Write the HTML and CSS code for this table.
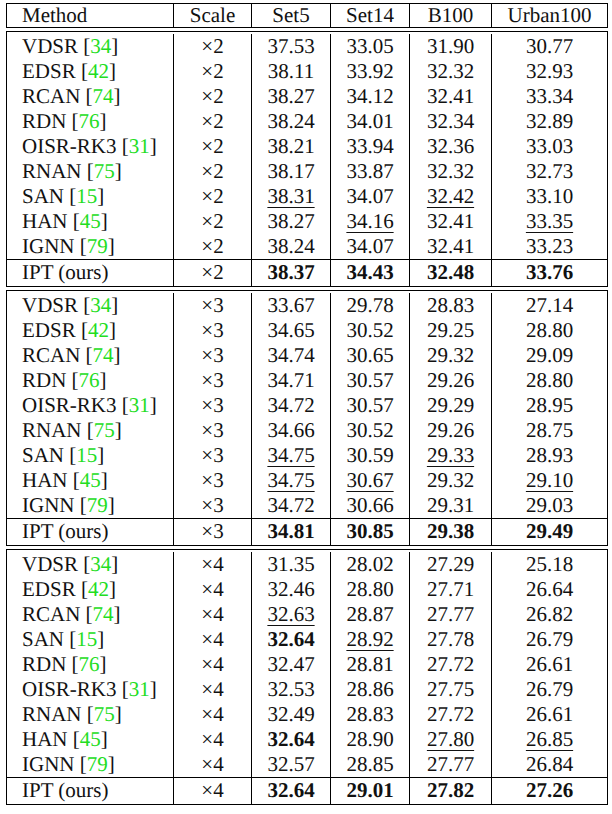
FILE: index.html
```html
<!DOCTYPE html>
<html>
<head>
<meta charset="utf-8">
<link rel="stylesheet" href="styles.css">
</head>
<body>
<div class="tbl">
  <div class="blk head">
    <div class="row">
      <div class="c m">Method</div><div class="c">Scale</div><div class="c">Set5</div><div class="c">Set14</div><div class="c">B100</div><div class="c">Urban100</div>
    </div>
  </div>

  <div class="blk sec">
    <div class="row"><div class="c m">VDSR [<span class="ref">34</span>]</div><div class="c">×2</div><div class="c">37.53</div><div class="c">33.05</div><div class="c">31.90</div><div class="c">30.77</div></div>
    <div class="row"><div class="c m">EDSR [<span class="ref">42</span>]</div><div class="c">×2</div><div class="c">38.11</div><div class="c">33.92</div><div class="c">32.32</div><div class="c">32.93</div></div>
    <div class="row"><div class="c m">RCAN [<span class="ref">74</span>]</div><div class="c">×2</div><div class="c">38.27</div><div class="c">34.12</div><div class="c">32.41</div><div class="c">33.34</div></div>
    <div class="row"><div class="c m">RDN [<span class="ref">76</span>]</div><div class="c">×2</div><div class="c">38.24</div><div class="c">34.01</div><div class="c">32.34</div><div class="c">32.89</div></div>
    <div class="row"><div class="c m">OISR-RK3 [<span class="ref">31</span>]</div><div class="c">×2</div><div class="c">38.21</div><div class="c">33.94</div><div class="c">32.36</div><div class="c">33.03</div></div>
    <div class="row"><div class="c m">RNAN [<span class="ref">75</span>]</div><div class="c">×2</div><div class="c">38.17</div><div class="c">33.87</div><div class="c">32.32</div><div class="c">32.73</div></div>
    <div class="row"><div class="c m">SAN [<span class="ref">15</span>]</div><div class="c">×2</div><div class="c"><u>38.31</u></div><div class="c">34.07</div><div class="c"><u>32.42</u></div><div class="c">33.10</div></div>
    <div class="row"><div class="c m">HAN [<span class="ref">45</span>]</div><div class="c">×2</div><div class="c">38.27</div><div class="c"><u>34.16</u></div><div class="c">32.41</div><div class="c"><u>33.35</u></div></div>
    <div class="row"><div class="c m">IGNN [<span class="ref">79</span>]</div><div class="c">×2</div><div class="c">38.24</div><div class="c">34.07</div><div class="c">32.41</div><div class="c">33.23</div></div>
    <div class="row ours"><div class="c m">IPT (ours)</div><div class="c">×2</div><div class="c"><b>38.37</b></div><div class="c"><b>34.43</b></div><div class="c"><b>32.48</b></div><div class="c"><b>33.76</b></div></div>
  </div>

  <div class="blk sec">
    <div class="row"><div class="c m">VDSR [<span class="ref">34</span>]</div><div class="c">×3</div><div class="c">33.67</div><div class="c">29.78</div><div class="c">28.83</div><div class="c">27.14</div></div>
    <div class="row"><div class="c m">EDSR [<span class="ref">42</span>]</div><div class="c">×3</div><div class="c">34.65</div><div class="c">30.52</div><div class="c">29.25</div><div class="c">28.80</div></div>
    <div class="row"><div class="c m">RCAN [<span class="ref">74</span>]</div><div class="c">×3</div><div class="c">34.74</div><div class="c">30.65</div><div class="c">29.32</div><div class="c">29.09</div></div>
    <div class="row"><div class="c m">RDN [<span class="ref">76</span>]</div><div class="c">×3</div><div class="c">34.71</div><div class="c">30.57</div><div class="c">29.26</div><div class="c">28.80</div></div>
    <div class="row"><div class="c m">OISR-RK3 [<span class="ref">31</span>]</div><div class="c">×3</div><div class="c">34.72</div><div class="c">30.57</div><div class="c">29.29</div><div class="c">28.95</div></div>
    <div class="row"><div class="c m">RNAN [<span class="ref">75</span>]</div><div class="c">×3</div><div class="c">34.66</div><div class="c">30.52</div><div class="c">29.26</div><div class="c">28.75</div></div>
    <div class="row"><div class="c m">SAN [<span class="ref">15</span>]</div><div class="c">×3</div><div class="c"><u>34.75</u></div><div class="c">30.59</div><div class="c"><u>29.33</u></div><div class="c">28.93</div></div>
    <div class="row"><div class="c m">HAN [<span class="ref">45</span>]</div><div class="c">×3</div><div class="c"><u>34.75</u></div><div class="c"><u>30.67</u></div><div class="c">29.32</div><div class="c"><u>29.10</u></div></div>
    <div class="row"><div class="c m">IGNN [<span class="ref">79</span>]</div><div class="c">×3</div><div class="c">34.72</div><div class="c">30.66</div><div class="c">29.31</div><div class="c">29.03</div></div>
    <div class="row ours"><div class="c m">IPT (ours)</div><div class="c">×3</div><div class="c"><b>34.81</b></div><div class="c"><b>30.85</b></div><div class="c"><b>29.38</b></div><div class="c"><b>29.49</b></div></div>
  </div>

  <div class="blk sec">
    <div class="row"><div class="c m">VDSR [<span class="ref">34</span>]</div><div class="c">×4</div><div class="c">31.35</div><div class="c">28.02</div><div class="c">27.29</div><div class="c">25.18</div></div>
    <div class="row"><div class="c m">EDSR [<span class="ref">42</span>]</div><div class="c">×4</div><div class="c">32.46</div><div class="c">28.80</div><div class="c">27.71</div><div class="c">26.64</div></div>
    <div class="row"><div class="c m">RCAN [<span class="ref">74</span>]</div><div class="c">×4</div><div class="c"><u>32.63</u></div><div class="c">28.87</div><div class="c">27.77</div><div class="c">26.82</div></div>
    <div class="row"><div class="c m">SAN [<span class="ref">15</span>]</div><div class="c">×4</div><div class="c"><b>32.64</b></div><div class="c"><u>28.92</u></div><div class="c">27.78</div><div class="c">26.79</div></div>
    <div class="row"><div class="c m">RDN [<span class="ref">76</span>]</div><div class="c">×4</div><div class="c">32.47</div><div class="c">28.81</div><div class="c">27.72</div><div class="c">26.61</div></div>
    <div class="row"><div class="c m">OISR-RK3 [<span class="ref">31</span>]</div><div class="c">×4</div><div class="c">32.53</div><div class="c">28.86</div><div class="c">27.75</div><div class="c">26.79</div></div>
    <div class="row"><div class="c m">RNAN [<span class="ref">75</span>]</div><div class="c">×4</div><div class="c">32.49</div><div class="c">28.83</div><div class="c">27.72</div><div class="c">26.61</div></div>
    <div class="row"><div class="c m">HAN [<span class="ref">45</span>]</div><div class="c">×4</div><div class="c"><b>32.64</b></div><div class="c">28.90</div><div class="c"><u>27.80</u></div><div class="c"><u>26.85</u></div></div>
    <div class="row"><div class="c m">IGNN [<span class="ref">79</span>]</div><div class="c">×4</div><div class="c">32.57</div><div class="c">28.85</div><div class="c">27.77</div><div class="c">26.84</div></div>
    <div class="row ours"><div class="c m">IPT (ours)</div><div class="c">×4</div><div class="c"><b>32.64</b></div><div class="c"><b>29.01</b></div><div class="c"><b>27.82</b></div><div class="c"><b>27.26</b></div></div>
  </div>
</div>
</body>
</html>
```

FILE: styles.css
```css
html, body {
  margin: 0;
  padding: 0;
  background: #fff;
}
body {
  font-family: "Liberation Serif", "Times New Roman", "DejaVu Serif", serif;
  font-size: 21px;
  color: #111;
  text-rendering: geometricPrecision;
}
.tbl {
  padding: 3px 0 0 6px;
  width: 602px;
}
.blk {
  border: 1px solid #000;
  margin-top: 3px;
}
.blk.head {
  margin-top: 0;
  margin-bottom: 1px;
}
.blk.sec {
  padding-top: 2px;
}
.row {
  display: grid;
  grid-template-columns: 166px 78px 79px 79px 82px 116px;
  height: 25px;
}
.head .row {
  height: 23px;
}
.row.ours {
  border-top: 1px solid #000;
  height: 26px;
}
.c {
  border-left: 1px solid #000;
  text-align: center;
  line-height: 25px;
  white-space: nowrap;
}
.head .c {
  line-height: 22px;
}
.c.m {
  border-left: none;
  text-align: left;
  padding-left: 15px;
}
.ours .c {
  line-height: 24px;
}
.ref {
  color: #22dd22;
}
u {
  text-decoration-thickness: 1px;
  text-underline-offset: 4px;
}
b {
  font-weight: bold;
}
```
